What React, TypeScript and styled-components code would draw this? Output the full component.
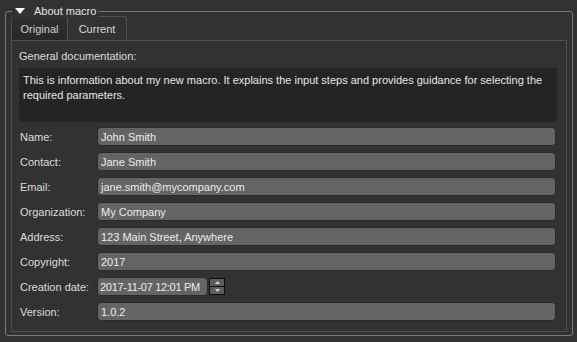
import React from 'react';
import styled, { createGlobalStyle } from 'styled-components';

const GlobalStyle = createGlobalStyle`
  html, body {
    margin: 0;
    padding: 0;
    background: #323232;
  }
  body {
    font-family: "Liberation Sans", Arial, sans-serif;
    font-size: 11px;
    color: #dcdcdc;
  }
`;

const fields = [
  { label: 'Name:', value: 'John Smith' },
  { label: 'Contact:', value: 'Jane Smith' },
  { label: 'Email:', value: 'jane.smith@mycompany.com' },
  { label: 'Organization:', value: 'My Company' },
  { label: 'Address:', value: '123 Main Street, Anywhere' },
  { label: 'Copyright:', value: '2017' },
];

const App = () => {
  return (
    <Page>
      <GlobalStyle />
      <Group>
        <Title>
          <svg viewBox="0 0 10 6" width="10" height="6">
            <polygon points="0,0 10,0 5,6" fill="#ffffff" />
          </svg>
          About macro
        </Title>
        <TabBar>
          <Tab>Original</Tab>
          <Tab active>Current</Tab>
        </TabBar>
        <Pane>
          <SectionTitle>General documentation:</SectionTitle>
          <DocBox>
            This is information about my new macro. It explains the input steps and provides guidance for selecting the
            required parameters.
          </DocBox>
          <Form>
            {fields.map(f => (
              <React.Fragment key={f.label}>
                <Label>{f.label}</Label>
                <Input>{f.value}</Input>
              </React.Fragment>
            ))}
            <Label>Creation date:</Label>
            <DateRow>
              <Input narrow>2017-11-07 12:01 PM</Input>
              <Spinner>
                <SpinButton>
                  <svg width="5" height="3" viewBox="0 0 5 3">
                    <polygon points="0,3 5,3 2.5,0" fill="#d8d8d8" />
                  </svg>
                </SpinButton>
                <SpinButton>
                  <svg width="5" height="3" viewBox="0 0 5 3">
                    <polygon points="0,0 5,0 2.5,3" fill="#d8d8d8" />
                  </svg>
                </SpinButton>
              </Spinner>
            </DateRow>
            <Label>Version:</Label>
            <Input>1.0.2</Input>
          </Form>
        </Pane>
      </Group>
    </Page>
  );
};

export default App;

const Page = styled.div`
  width: 577px;
  height: 342px;
  box-sizing: border-box;
  padding: 11px 4px 0 5px;
`;

const Group = styled.div`
  position: relative;
  height: 325px;
  box-sizing: border-box;
  border: 1px solid #7a7a7a;
  border-radius: 3px;
  padding: 4px 5px 3px 5px;
  display: flex;
  flex-direction: column;
`;

const Title = styled.div`
  position: absolute;
  left: 6px;
  top: -8px;
  height: 14px;
  padding: 0 2px 0 3px;
  background: #323232;
  display: flex;
  align-items: center;
  gap: 9px;
  font-size: 11px;
  color: #e6e6e6;
  white-space: nowrap;
`;

const TabBar = styled.div`
  display: flex;
  align-items: flex-end;
  height: 24px;
  flex-shrink: 0;
`;

const Tab = styled.div<{ active?: boolean }>`
  box-sizing: border-box;
  height: ${p => (p.active ? 24 : 23)}px;
  width: ${p => (p.active ? 60 : 57)}px;
  justify-content: center;
  border: 1px solid #4e4e4e;
  border-bottom: none;
  border-radius: 3px 3px 0 0;
  background: ${p =>
    p.active ? '#323232' : 'linear-gradient(#2e2e2e, #282828)'};
  color: ${p => (p.active ? '#d8d8d8' : '#cfcfcf')};
  font-size: 11px;
  display: flex;
  align-items: center;
  margin-left: ${p => (p.active ? -1 : 0)}px;
`;

const Pane = styled.div`
  flex: 1;
  border: 1px solid #4e4e4e;
  padding: 7px 9px 0 7px;
  display: flex;
  flex-direction: column;
`;

const SectionTitle = styled.div`
  height: 16px;
  line-height: 16px;
  color: #dcdcdc;
  margin-bottom: 4px;
`;

const DocBox = styled.div`
  height: 54px;
  background: #242424;
  padding: 5px 4px;
  box-sizing: border-box;
  line-height: 15px;
  color: #e6e6e6;
  margin-bottom: 5px;
`;

const Form = styled.div`
  display: grid;
  grid-template-columns: 78px 1fr;
  row-gap: 6px;
  align-items: center;
  margin-right: 1px;
`;

const Label = styled.div`
  padding-left: 1px;
  color: #dcdcdc;
  white-space: nowrap;
`;

const Input = styled.div<{ narrow?: boolean }>`
  box-sizing: border-box;
  height: 19px;
  ${p => (p.narrow ? 'width: 111px; letter-spacing: -0.3px; padding: 0 2px !important;' : '')}
  background: #646464;
  border: 1px solid #2a2a2a;
  border-radius: 4px;
  padding: 0 3px;
  display: flex;
  align-items: center;
  color: #ececec;
  white-space: nowrap;
  overflow: hidden;
`;

const DateRow = styled.div`
  display: flex;
  align-items: center;
  gap: 1px;
`;

const Spinner = styled.div`
  width: 16px;
  height: 17px;
  box-sizing: border-box;
  border: 1px solid #0e0e0e;
  background: #0e0e0e;
  display: flex;
  flex-direction: column;
  gap: 1px;
`;

const SpinButton = styled.div`
  flex: 1;
  background: #5c5c5c;
  display: flex;
  align-items: center;
  justify-content: center;
`;
